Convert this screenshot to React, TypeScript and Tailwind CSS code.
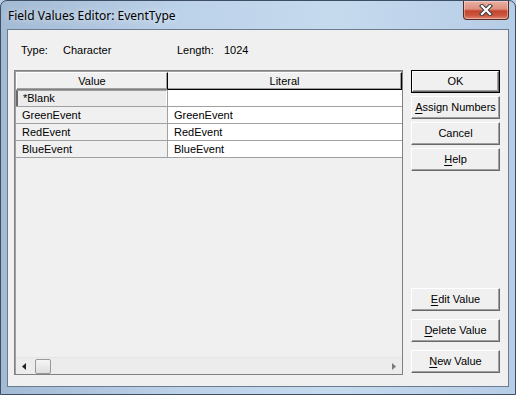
import React from "react";

const sans = "font-['Liberation_Sans',Arial,sans-serif]";

function U({ c }: { c: string }) {
  return <span className="underline underline-offset-[2px] decoration-1">{c}</span>;
}

function Btn({ children, def }: { children: React.ReactNode; def?: boolean }) {
  return (
    <div className={def ? "h-[23px] w-[89px] border border-black" : "h-[23px] w-[89px]"}>
      <div className="h-full w-full flex items-center justify-center bg-[#f0f0f0] border-t border-l border-t-white border-l-white border-r border-b border-r-[#696969] border-b-[#696969] shadow-[inset_-1px_-1px_0_#a0a0a0] text-[11px] text-black leading-none">
        {children}
      </div>
    </div>
  );
}

const rows = [
  { v: "*Blank", l: "", sel: true },
  { v: "GreenEvent", l: "GreenEvent" },
  { v: "RedEvent", l: "RedEvent" },
  { v: "BlueEvent", l: "BlueEvent" },
];

export default function App() {
  return (
    <div className={`w-[516px] h-[395px] bg-[#b9cde3] ${sans}`}>
      <div className="w-full h-full rounded-t-[7px] border border-[#3f4f63] flex flex-col bg-[linear-gradient(to_right,#a3bad4_0%,#bcd2e9_35%,#c6daee_65%,#b6cde6_100%)]">
        {/* title bar */}
        <div className="h-[28px] flex items-start justify-between pl-[7px] pr-[6px] shrink-0">
          <div className="pt-[8px] text-[12px] leading-[14px] text-black font-['Noto_Sans',sans-serif] [text-shadow:0_0_6px_rgba(255,255,255,0.9)]">
            Field Values Editor: EventType
          </div>
          <div className="w-[46px] h-[19px] rounded-b-[4px] border border-t-0 border-[#5a2a22] bg-[linear-gradient(to_bottom,#eab0a3_0%,#de8f7e_45%,#c5452d_55%,#cb563f_80%,#dd8a77_100%)] flex items-center justify-center shadow-[inset_0_0_0_1px_rgba(255,255,255,0.35)]">
            <svg width="14" height="12" viewBox="0 0 14 12">
              <path d="M3 2 L11 10 M11 2 L3 10" stroke="#3b3b3b" strokeWidth="4.2" strokeLinecap="square" />
              <path d="M3 2 L11 10 M11 2 L3 10" stroke="#ffffff" strokeWidth="2.2" strokeLinecap="square" />
            </svg>
          </div>
        </div>
        {/* client */}
        <div className="flex-1 ml-[6px] mr-[6px] mb-[7px] border border-[#6b7c90] bg-[#f0f0f0] flex flex-col pt-[14px] pb-[11px]">
          <div className="flex pl-[13px] text-[11px] leading-[13px] text-black h-[13px]">
            <span className="w-[42px]">Type:</span>
            <span className="w-[114px]">Character</span>
            <span className="w-[47px]">Length:</span>
            <span>1024</span>
          </div>
          <div className="flex-1 flex mt-[13px] pl-[6px] pr-[8px] gap-[8px]">
            {/* grid */}
            <div className="w-[389px] border border-[#808080] flex">
              <div className="flex-1 flex flex-col border-t border-l border-[#a0a0a0] bg-[#f0f0f0] text-[11px] text-black">
                {/* header */}
                <div className="flex h-[18px] shrink-0">
                  <div className="w-[152px] flex items-center justify-center border-t border-l border-t-white border-l-white border-r border-b border-r-black border-b-[#808080] shadow-[inset_-1px_-1px_0_#a0a0a0] leading-none">
                    Value
                  </div>
                  <div className="flex-1 flex items-center justify-center border-t border-t-white border-r border-b border-r-black border-b-black shadow-[inset_-1px_-1px_0_#a0a0a0] leading-none">
                    Literal
                  </div>
                </div>
                {rows.map((r) => (
                  <div key={r.v} className="flex h-[17px] shrink-0 border-b border-[#a0a0a0]">
                    {r.sel ? (
                      <div className="w-[152px] border-r border-[#a0a0a0] flex">
                        <div className="flex-1 flex items-center pl-[5px] bg-[#ececec] border-l-2 border-t border-l-[#696969] border-t-[#a0a0a0] border-r border-r-white leading-none">
                          {r.v}
                        </div>
                      </div>
                    ) : (
                      <div className="w-[152px] border-r border-[#a0a0a0] flex items-center pl-[6px] leading-none">
                        {r.v}
                      </div>
                    )}
                    <div className="flex-1 bg-white flex items-center pl-[6px] leading-none">{r.l}</div>
                  </div>
                ))}
                <div className="flex-1" />
                {/* scrollbar */}
                <div className="h-[17px] shrink-0 flex items-center border-t border-[#e6e6e6] bg-[#ececec]">
                  <div className="w-[17px] h-full flex items-center justify-center">
                    <svg width="5" height="7" viewBox="0 0 5 7">
                      <path d="M4 0 L0 3.5 L4 7 Z" fill="#222" />
                    </svg>
                  </div>
                  <div className="ml-[2px] w-[16px] h-[15px] rounded-[2px] border border-[#999] bg-[linear-gradient(to_bottom,#f6f6f6,#dedede)]" />
                  <div className="flex-1" />
                  <div className="w-[17px] h-full flex items-center justify-center">
                    <svg width="5" height="7" viewBox="0 0 5 7">
                      <path d="M1 0 L5 3.5 L1 7 Z" fill="#7a7a7a" />
                    </svg>
                  </div>
                </div>
              </div>
            </div>
            {/* buttons */}
            <div className="w-[89px] flex flex-col">
              <div className="flex flex-col gap-[3px]">
                <Btn def>OK</Btn>
                <Btn>
                  <U c="A" />ssign Numbers
                </Btn>
                <Btn>Cancel</Btn>
                <Btn>
                  <U c="H" />elp
                </Btn>
              </div>
              <div className="mt-auto mb-[2px] flex flex-col gap-[8px]">
                <Btn>
                  <U c="E" />dit Value
                </Btn>
                <Btn>
                  <U c="D" />elete Value
                </Btn>
                <Btn>
                  <U c="N" />ew Value
                </Btn>
              </div>
            </div>
          </div>
        </div>
      </div>
    </div>
  );
}
